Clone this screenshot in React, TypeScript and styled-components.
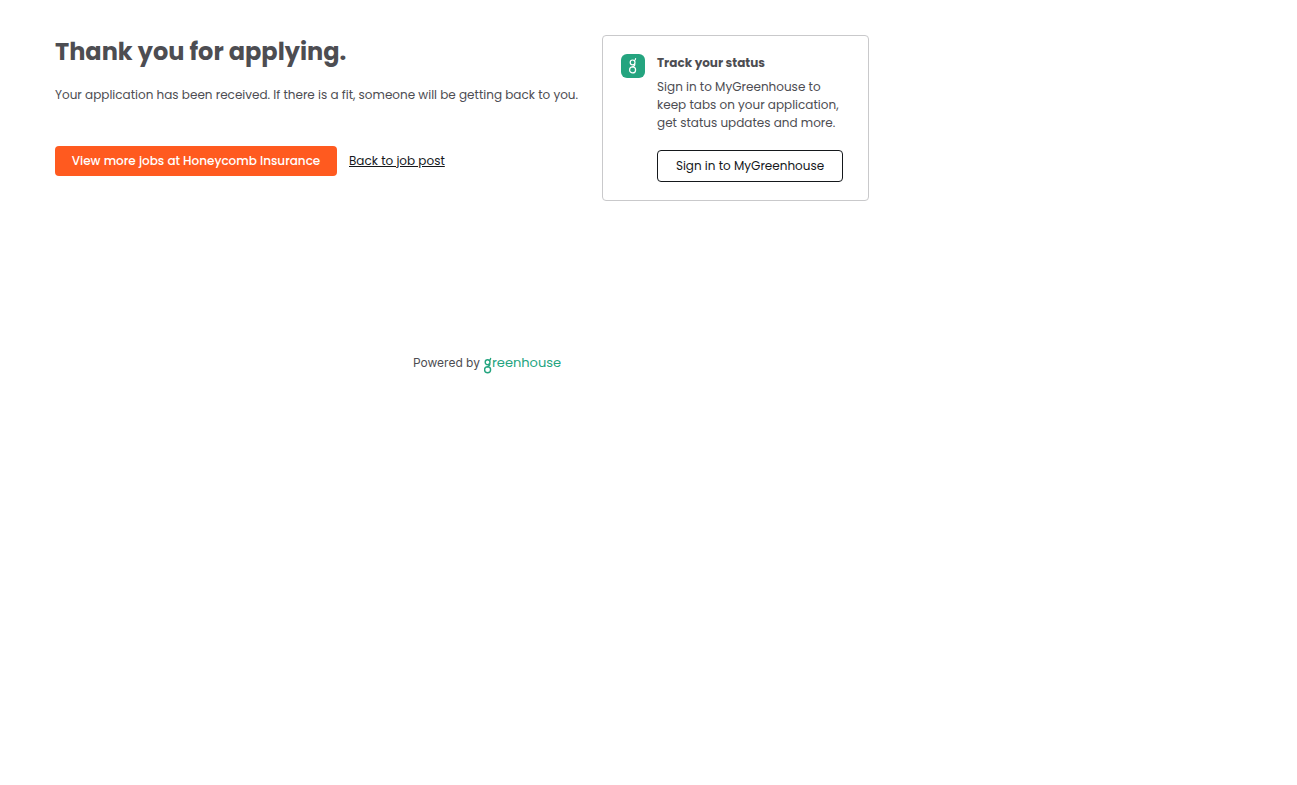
import React from "react";
import styled, { createGlobalStyle } from "styled-components";

const GlobalStyle = createGlobalStyle`
  *, *::before, *::after { box-sizing: border-box; }
  body {
    margin: 0;
    background: #fff;
    color: #4d4d52;
    font-family: Poppins, Inter, "Liberation Sans", sans-serif;
    font-size: 12px;
    line-height: 18px;
  }
`;

const Page = styled.div`
  max-width: 974px;
`;

const Main = styled.main`
  display: flex;
  align-items: flex-start;
  gap: 24px;
  padding: 35px 55px 0;
`;

const Confirmation = styled.section`
  flex: 0 1 523px;
`;

const Title = styled.h1`
  margin: 0 0 18px;
  font-size: 24px;
  line-height: 33px;
  font-weight: 700;
`;

const Message = styled.p`
  margin: 0;
  white-space: nowrap;
`;

const Actions = styled.div`
  display: flex;
  align-items: center;
  gap: 12px;
  margin-top: 42px;
`;

const PrimaryButton = styled.button`
  width: 282px;
  height: 30px;
  padding: 0;
  border: 0;
  border-radius: 4px;
  background: #ff5a1f;
  color: #fff;
  font: inherit;
  font-weight: 500;
  cursor: pointer;
`;

const TextLink = styled.a`
  color: #15181c;
  text-decoration: underline;
`;

const Card = styled.aside`
  display: flex;
  flex: 0 0 267px;
  gap: 12px;
  padding: 18px;
  border: 1px solid #c9c9cb;
  border-radius: 4px;
`;

const Badge = styled.svg`
  flex: none;
  display: block;
`;

const CardTitle = styled.h2`
  margin: 0 0 6px;
  font-size: 12px;
  line-height: 18px;
  font-weight: 700;
`;

const CardText = styled.p`
  margin: 0 0 18px;
  white-space: nowrap;
`;

const OutlineButton = styled.button`
  width: 186px;
  height: 32px;
  padding: 0;
  border: 1px solid #15181c;
  border-radius: 4px;
  background: #fff;
  color: #15181c;
  font: inherit;
  cursor: pointer;
`;

const Footer = styled.footer`
  display: flex;
  justify-content: center;
  align-items: flex-start;
  gap: 4px;
  margin-top: 153px;
  font-family: Inter, sans-serif;
`;

const Brand = styled.a`
  display: flex;
  align-items: flex-start;
  color: #24a47f;
  font-family: Poppins, sans-serif;
  font-size: 13px;
  text-decoration: none;
`;

const BrandMark = styled.svg`
  display: block;
`;

function Mark() {
  return (
    <g fill="none" stroke="currentColor" strokeLinecap="round">
      <circle cx="3.6" cy="6.2" r="2.4" />
      <path d="M5.3 4.5C6.3 4 6.6 3.3 6.6 2.4" />
      <path d="M5.5 7.7C6.6 9.2 4.6 9.9 3.6 10.7" />
      <circle cx="3.6" cy="13.7" r="3" />
    </g>
  );
}

export default function App() {
  return (
    <>
      <GlobalStyle />
      <Page>
        <Main>
          <Confirmation>
            <Title>Thank you for applying.</Title>
            <Message>
              Your application has been received. If there is a fit, someone will be getting back to you.
            </Message>
            <Actions>
              <PrimaryButton type="button">View more jobs at Honeycomb Insurance</PrimaryButton>
              <TextLink href="#job">Back to job post</TextLink>
            </Actions>
          </Confirmation>
          <Card>
            <Badge width="24" height="24" viewBox="0 0 24 24" color="#fff" aria-hidden="true">
              <rect width="24" height="24" rx="6" fill="#24a47f" />
              <g transform="translate(8 2.2)" strokeWidth="1.2">
                <Mark />
              </g>
            </Badge>
            <div>
              <CardTitle>Track your status</CardTitle>
              <CardText>
                Sign in to MyGreenhouse to
                <br />
                keep tabs on your application,
                <br />
                get status updates and more.
              </CardText>
              <OutlineButton type="button">Sign in to MyGreenhouse</OutlineButton>
            </div>
          </Card>
        </Main>
        <Footer>
          <span>Powered by</span>
          <Brand href="#greenhouse" aria-label="greenhouse">
            <BrandMark width="8" height="20" viewBox="0 -2 8 20" strokeWidth="1.4" aria-hidden="true">
              <Mark />
            </BrandMark>
            <span>reenhouse</span>
          </Brand>
        </Footer>
      </Page>
    </>
  );
}
